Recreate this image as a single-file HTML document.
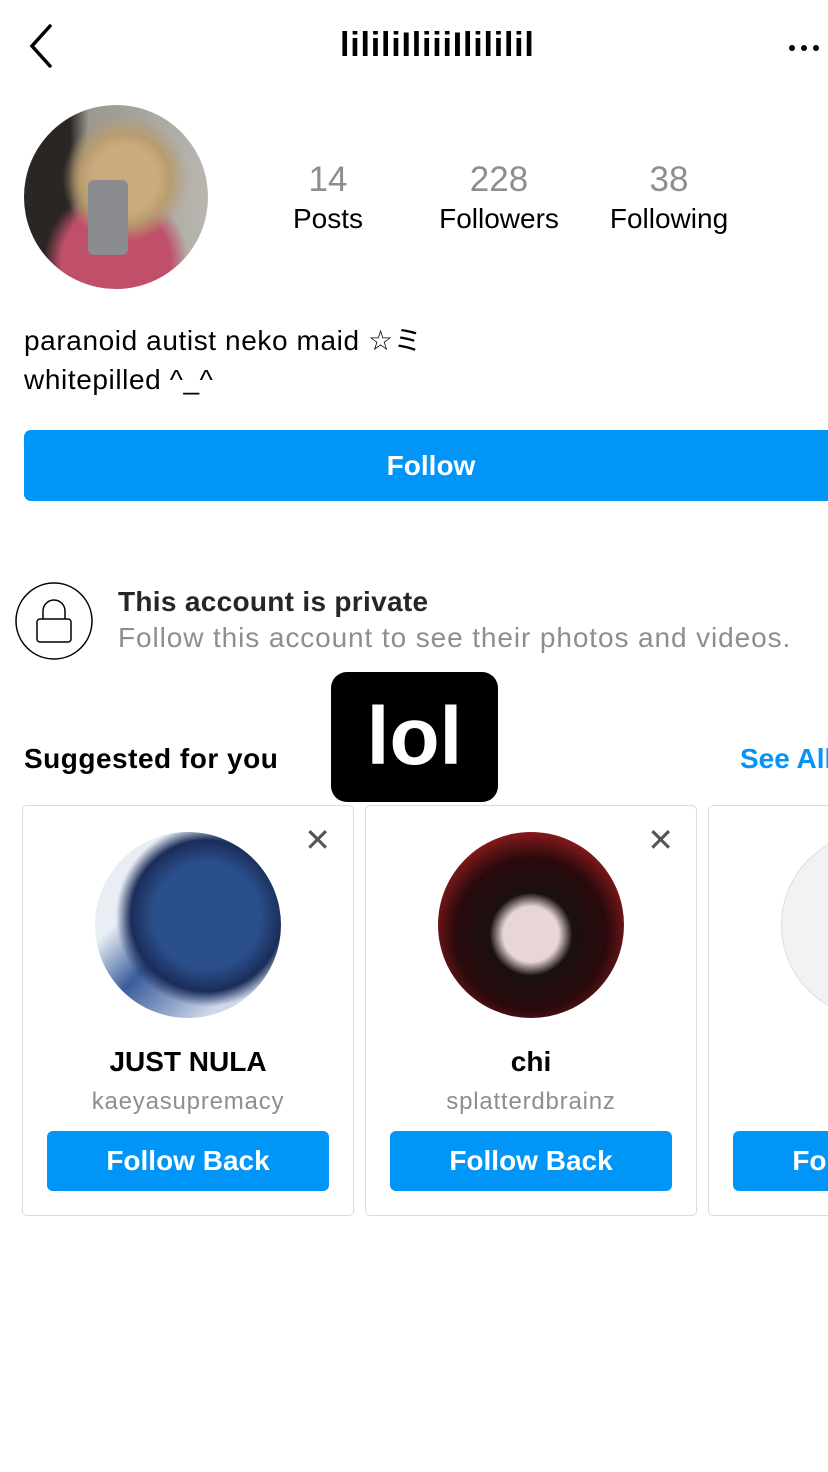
<!DOCTYPE html>
<html><head><meta charset="utf-8"><style>
*{margin:0;padding:0;box-sizing:border-box}
body{width:828px;height:1472px;background:#fff;font-family:"Liberation Sans",sans-serif;color:#000;position:relative;overflow:hidden}
.a{position:absolute;white-space:nowrap}
.num{color:#8e8e8e;font-size:35px;text-align:center;width:180px}
.lbl{font-size:28px;text-align:center;width:180px}
.card{position:absolute;top:805px;width:332px;height:411px;border:1px solid #dbdbdb;border-radius:5px;background:#fff;overflow:hidden}
.av{position:absolute;left:72px;top:26px;width:186px;height:186px;border-radius:50%}
.nm{position:absolute;top:240px;width:100%;text-align:center;font-weight:bold;font-size:28px}
.un{position:absolute;top:282px;width:100%;text-align:center;color:#8e8e8e;font-size:24px;letter-spacing:0.8px}
.fb{position:absolute;left:24px;top:325px;width:282px;height:60px;border-radius:6px;background:#0095f6;color:#fff;font-weight:bold;font-size:28px;text-align:center;line-height:60px}
.x{position:absolute;right:22px;top:18px;font-size:32px;color:#555;line-height:32px}
</style></head><body>
<svg class="a" style="left:26px;top:24px" width="30" height="44"><path d="M24 2 L6 22 L24 42" fill="none" stroke="#000" stroke-width="3.5" stroke-linecap="round"/></svg>
<div class="a" style="left:340px;top:26px;font-size:34px;font-weight:bold;letter-spacing:0.8px">lililiIliiiIlililil</div>
<svg class="a" style="left:788px;top:42px" width="34" height="12"><circle cx="4" cy="6" r="3"/><circle cx="16" cy="6" r="3"/><circle cx="28" cy="6" r="3"/></svg>
<div class="a" style="left:24px;top:105px;width:184px;height:184px;border-radius:50%;background:radial-gradient(circle at 55% 40%,#c9ab7d 0 22%,#b89c70 30%,transparent 42%),radial-gradient(circle at 50% 85%,#c0506a 0 30%,transparent 40%),linear-gradient(90deg,#2a2624 0 25%,#9a9690 35%,#b9b6b0 100%)"></div>
<div class="a" style="left:88px;top:180px;width:40px;height:75px;background:#8b8c90;border-radius:6px"></div>
<div class="a num" style="left:238px;top:160px">14</div>
<div class="a lbl" style="left:238px;top:203px">Posts</div>
<div class="a num" style="left:409px;top:160px">228</div>
<div class="a lbl" style="left:409px;top:203px">Followers</div>
<div class="a num" style="left:579px;top:160px">38</div>
<div class="a lbl" style="left:579px;top:203px">Following</div>
<div class="a" style="left:24px;top:321px;font-size:28px;line-height:39px;letter-spacing:0.6px">paranoid autist neko maid ☆ミ<br>whitepilled ^_^</div>
<div class="a" style="left:24px;top:430px;width:804px;height:71px;background:#0095f6;border-radius:7px 0 0 7px"></div>
<div class="a" style="left:24px;top:430px;width:814px;line-height:71px;text-align:center;color:#fff;font-weight:bold;font-size:28px">Follow</div>
<svg class="a" style="left:14px;top:581px" width="80" height="80"><circle cx="40" cy="40" r="38" fill="none" stroke="#000" stroke-width="1.5"/><path d="M29 38 V30 a11 11 0 0 1 22 0 V38" fill="none" stroke="#000" stroke-width="1.5"/><rect x="23" y="38" width="34" height="23" rx="3" fill="none" stroke="#000" stroke-width="1.5"/></svg>
<div class="a" style="left:118px;top:586px;font-size:28px;font-weight:bold;color:#262626;letter-spacing:0.3px">This account is private</div>
<div class="a" style="left:118px;top:622px;font-size:28px;color:#8e8e8e;letter-spacing:0.9px">Follow this account to see their photos and videos.</div>
<div class="a" style="left:24px;top:743px;font-size:28px;font-weight:bold;letter-spacing:0.5px">Suggested for you</div>
<div class="a" style="left:740px;top:743px;font-size:28px;font-weight:bold;color:#0095f6">See All</div>
<div class="card" style="left:22px"><div class="av" style="background:radial-gradient(circle at 60% 45%,#2b4f8a 0 35%,#1a2d5a 50%,transparent 60%),linear-gradient(135deg,#e9eef5 0 30%,#3a5c9a 50%,#cfd8ea 80%)"></div><div class="x">✕</div><div class="nm">JUST NULA</div><div class="un">kaeyasupremacy</div><div class="fb">Follow Back</div></div>
<div class="card" style="left:365px"><div class="av" style="background:radial-gradient(circle at 50% 55%,#e8d6d6 0 20%,#1a1012 30%,#2a0a0c 55%,#8a1a1c 75%)"></div><div class="x">✕</div><div class="nm">chi</div><div class="un">splatterdbrainz</div><div class="fb">Follow Back</div></div>
<div class="card" style="left:708px;width:120px;border-right:none;border-radius:5px 0 0 5px"><div class="av" style="background:#f2f2f4;border:1px solid #ddd"></div><div class="nm" style="width:332px">dexter</div><div class="un" style="width:332px">dexter</div><div class="fb">Follow Back</div></div>
<div class="a" style="left:331px;top:672px;width:167px;height:130px;background:#000;border-radius:16px;color:#fff;font-weight:bold;font-size:82px;text-align:center;line-height:130px">lol</div>
</body></html>
